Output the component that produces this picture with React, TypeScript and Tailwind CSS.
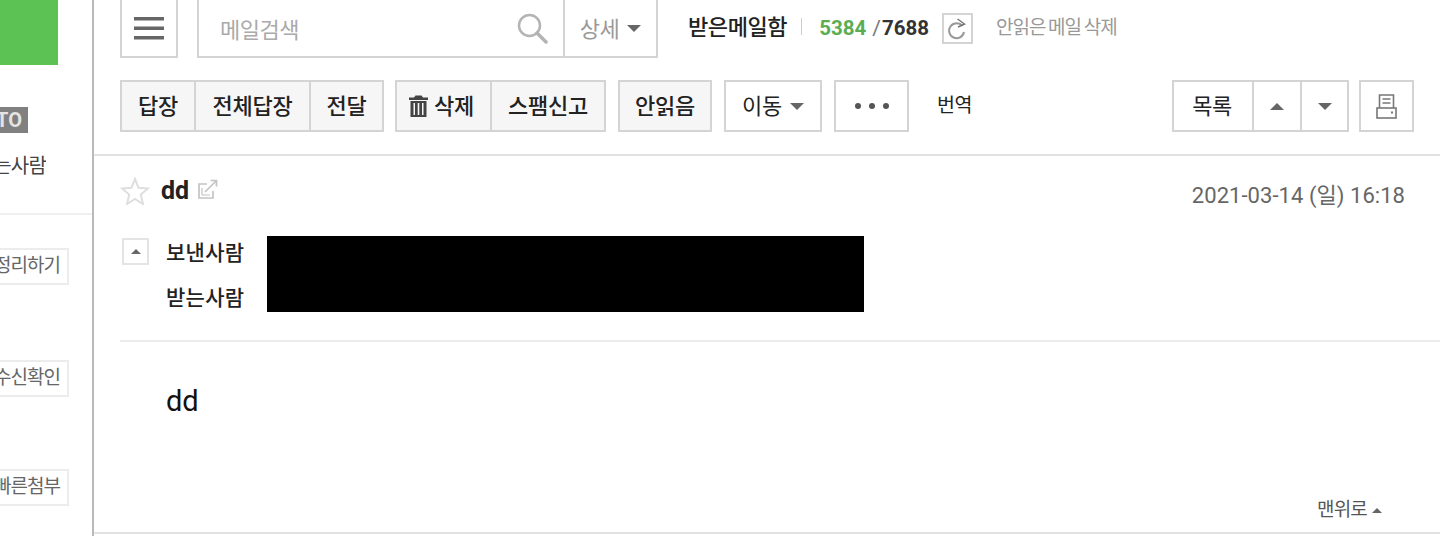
import React from "react";

const B = "border-[#d4d4d4]";

function Tri({ up = false, color = "#666", w = 14, h = 7 }: { up?: boolean; color?: string; w?: number; h?: number }) {
  return (
    <svg width={w} height={h} viewBox="0 0 14 7" className="shrink-0">
      <path d={up ? "M7 0 L14 7 L0 7 Z" : "M0 0 L14 0 L7 7 Z"} fill={color} />
    </svg>
  );
}

function Btn({ children, w, gray = false, first = false }: { children: React.ReactNode; w: string; gray?: boolean; first?: boolean }) {
  return (
    <div
      className={`${w} ${gray ? "bg-[#f6f6f6] font-medium" : "bg-white"} ${first ? "" : "border-l-2"} flex h-full items-center justify-center border-[#d4d4d4] text-[22px] tracking-[-0.3px] text-[#222]`}
    >
      {children}
    </div>
  );
}

function Group({ children, className = "" }: { children: React.ReactNode; className?: string }) {
  return <div className={`flex h-[52px] border-2 ${B} ${className}`}>{children}</div>;
}

function SideBtn({ label, className }: { label: string; className: string }) {
  return (
    <div className={`flex h-[37px] w-[69px] items-center justify-end overflow-hidden whitespace-nowrap border-2 border-l-0 border-[#ececec] pr-[7px] text-[19px] tracking-[-1px] text-[#666] ${className}`}>
      {label}
    </div>
  );
}

export default function App() {
  return (
    <div className="flex h-[536px] w-[1440px] overflow-hidden bg-white font-['Roboto','Noto_Sans_CJK_KR',sans-serif]">
      {/* sidebar */}
      <aside className="flex h-full w-[94px] shrink-0 flex-col overflow-hidden border-r-2 border-[#b9b9b9]">
        <div className="h-[65px] w-[58px] bg-[#5bc253]" />
        <div className="mt-[42px] flex h-[26px] w-[28px] items-center justify-end overflow-hidden bg-[#808080] pr-[6px] text-[20px] font-bold text-[#e4e4e4]">
          TO
        </div>
        <div className="mt-[21px] flex h-[24px] w-[46px] items-center justify-end overflow-hidden whitespace-nowrap text-[20px] tracking-[-0.8px] text-[#444]">
          받는사람
        </div>
        <div className="mt-[35px] h-[2px] w-full bg-[#f0f0f0]" />
        <SideBtn label="정리하기" className="mt-[33px]" />
        <SideBtn label="수신확인" className="mt-[75px]" />
        <SideBtn label="빠른첨부" className="mt-[72px]" />
      </aside>

      {/* main */}
      <main className="flex min-w-0 flex-1 flex-col">
        {/* top row */}
        <div className="flex h-[58px] shrink-0 items-stretch pl-[26px]">
          <div className={`flex w-[58px] items-center justify-center border-2 border-t-0 ${B}`}>
            <svg width="30" height="23" viewBox="0 0 30 23">
              <rect x="0" y="0" width="30" height="3.5" fill="#666" />
              <rect x="0" y="9.5" width="30" height="3.5" fill="#666" />
              <rect x="0" y="19" width="30" height="3.5" fill="#666" />
            </svg>
          </div>
          <div className={`ml-[19px] flex w-[368px] items-center border-2 border-t-0 ${B} pl-[21px] pr-[15px]`}>
            <span className="flex-1 pt-[4px] text-[22px] tracking-[-0.5px] text-[#aaa]">메일검색</span>
            <svg width="31" height="31" viewBox="0 0 31 31" fill="none" stroke="#b4b4b4">
              <circle cx="12.5" cy="12.5" r="10.5" strokeWidth="2.5" />
              <path d="M20 20 L29 29" strokeWidth="3.5" strokeLinecap="round" />
            </svg>
          </div>
          <div className={`flex w-[93px] items-center justify-center gap-[8px] border-2 border-l-0 border-t-0 ${B}`}>
            <span className="pt-[2px] text-[22px] tracking-[-0.5px] text-[#999]">상세</span>
            <Tri color="#666" />
          </div>
          <div className="ml-[30px] flex h-[57px] items-center">
            <span className="pb-[2px] text-[22px] font-medium tracking-[-0.4px] text-[#222]">받은메일함</span>
            <span className="ml-[14px] mb-[4px] h-[17px] w-[1px] bg-[#ccc]" />
            <span className="ml-[17px] text-[20.5px] font-bold text-[#5bad54]">5384</span>
            <span className="ml-[6px] text-[21px] text-[#777]">/</span>
            <span className="ml-[1px] text-[20.5px] font-bold text-[#333]">7688</span>
            <span className={`ml-[13px] flex h-[31px] w-[31px] items-center justify-center border-2 ${B}`}>
              <svg width="20" height="22" viewBox="0 0 20 22" fill="none">
                <path d="M15.5 8 A7.5 7.5 0 1 0 17 14" stroke="#999" strokeWidth="2" />
                <path d="M10.5 1 L17.5 6 L11 9" stroke="#777" strokeWidth="1.5" />
              </svg>
            </span>
            <span className="ml-[23px] text-[19px] tracking-[-1px] [word-spacing:-1px] text-[#999]">안읽은 메일 삭제</span>
          </div>
        </div>

        {/* action row */}
        <div className="mt-[22px] flex h-[52px] shrink-0 items-center pl-[26px] pr-[26px]">
          <Group>
            <Btn w="w-[72px]" gray first>답장</Btn>
            <Btn w="w-[115px]" gray>전체답장</Btn>
            <Btn w="w-[73px]" gray>전달</Btn>
          </Group>
          <Group className="ml-[11px]">
            <Btn w="w-[93px]" gray first>
              <span className="flex items-center pr-[5px]">
                <svg width="21" height="24" viewBox="0 0 21 24" className="mr-[5px]" fill="#444">
                  <path d="M7.5 1.5h6l1.5 2h5v2.5H1V3.500h5z" />
                  <path d="M2.500 7h16v16h-16zM5.500 9v12H7V9zM9.700 9v12h1.600V9zM14 9v12h1.500V9z" fillRule="evenodd" />
                </svg>
                삭제
              </span>
            </Btn>
            <Btn w="w-[114px]" gray>스팸신고</Btn>
          </Group>
          <Group className="ml-[12px]">
            <Btn w="w-[90px]" gray first>안읽음</Btn>
          </Group>
          <Group className="ml-[12px]">
            <Btn w="w-[94px]" first>
              <span className="mr-[8px]">이동</span>
              <Tri color="#666" />
            </Btn>
          </Group>
          <Group className="ml-[12px]">
            <Btn w="w-[71px]" first>
              <span className="flex gap-[8px]">
                <i className="h-[6px] w-[6px] rounded-full bg-[#555]" />
                <i className="h-[6px] w-[6px] rounded-full bg-[#555]" />
                <i className="h-[6px] w-[6px] rounded-full bg-[#555]" />
              </span>
            </Btn>
          </Group>
          <span className="ml-[28px] text-[19.5px] tracking-[-0.5px] text-[#222]">번역</span>
          <div className="flex-1" />
          <Group>
            <Btn w="w-[78px]" first><span className="pr-[2px] tracking-[-0.6px]">목록</span></Btn>
            <Btn w="w-[48px]"><Tri up color="#666" /></Btn>
            <Btn w="w-[47px]"><Tri color="#666" /></Btn>
          </Group>
          <Group className="ml-[10px]">
            <Btn w="w-[51px]" first>
              <svg width="21" height="25" viewBox="0 0 21 25" fill="none" stroke="#777" strokeWidth="1.6">
                <path d="M3.500 14V1h14v13" />
                <path d="M6.500 5h8M6.500 9h8" strokeWidth="1.3" />
                <rect x="1" y="14" width="19" height="10" />
                <rect x="15" y="17.500" width="2" height="2" fill="#777" stroke="none" />
              </svg>
            </Btn>
          </Group>
        </div>

        <div className="mt-[22px] h-[2px] shrink-0 bg-[#e2e2e2]" />

        {/* subject */}
        <div className="flex h-[64px] shrink-0 items-start pl-[26px] pr-[35px]">
          <svg width="30" height="28" viewBox="0 0 30 28" fill="none" stroke="#dedede" strokeWidth="2" className="mt-[21px]">
            <path d="M15 2 L18.600 10.800 L28 11.500 L20.800 17.600 L23 27 L15 22 L7 27 L9.200 17.600 L2 11.500 L11.400 10.800 Z" />
          </svg>
          <span className="ml-[11px] mt-[19px] text-[25px] font-bold leading-[32px] text-[#222]">dd</span>
          <svg width="20" height="20" viewBox="0 0 20 20" fill="none" stroke="#c4c4c4" strokeWidth="1.700" className="ml-[9px] mt-[23px]">
            <path d="M9 5H1v14h14v-7" />
            <path d="M4 16V9M4 16h8" strokeWidth="1.200" />
            <path d="M7 13 L18 2 M12.500 1.500h6v6" />
          </svg>
          <div className="flex-1" />
          <span className="mt-[25px] text-[22px] leading-[30px] tracking-[0.05px] text-[#666]">2021-03-14 (일) 16:18</span>
        </div>

        {/* sender block */}
        <div className="flex h-[120px] shrink-0 pl-[28px]">
          <div className="mt-[18px] flex h-[27px] w-[27px] items-center justify-center border-2 border-[#e4e4e4]">
            <Tri up color="#666" w={10} h={5} />
          </div>
          <div className="ml-[17px] flex w-[101px] flex-col pt-[19px] text-[21px] font-medium leading-[29px] tracking-[0.3px] text-[#222]">
            <span>보낸사람</span>
            <span className="mt-[16px]">받는사람</span>
          </div>
          <div className="mt-[16px] h-[76px] w-[597px] bg-black" />
        </div>

        <div className="ml-[26px] h-[2px] shrink-0 bg-[#ededed]" />

        {/* body */}
        <div className="ml-[72px] mt-[39px] shrink-0 text-[29px] leading-[40px] text-[#111]">dd</div>

        <div className="mt-[74px] flex h-[30px] shrink-0 items-center justify-end gap-[5px] pr-[58px]">
          <span className="text-[19px] tracking-[-0.8px] text-[#555]">맨위로</span>
          <Tri up color="#666" w={10} h={5} />
        </div>
        <div className="mt-[7px] h-[2px] shrink-0 bg-[#e2e2e2]" />
      </main>
    </div>
  );
}
